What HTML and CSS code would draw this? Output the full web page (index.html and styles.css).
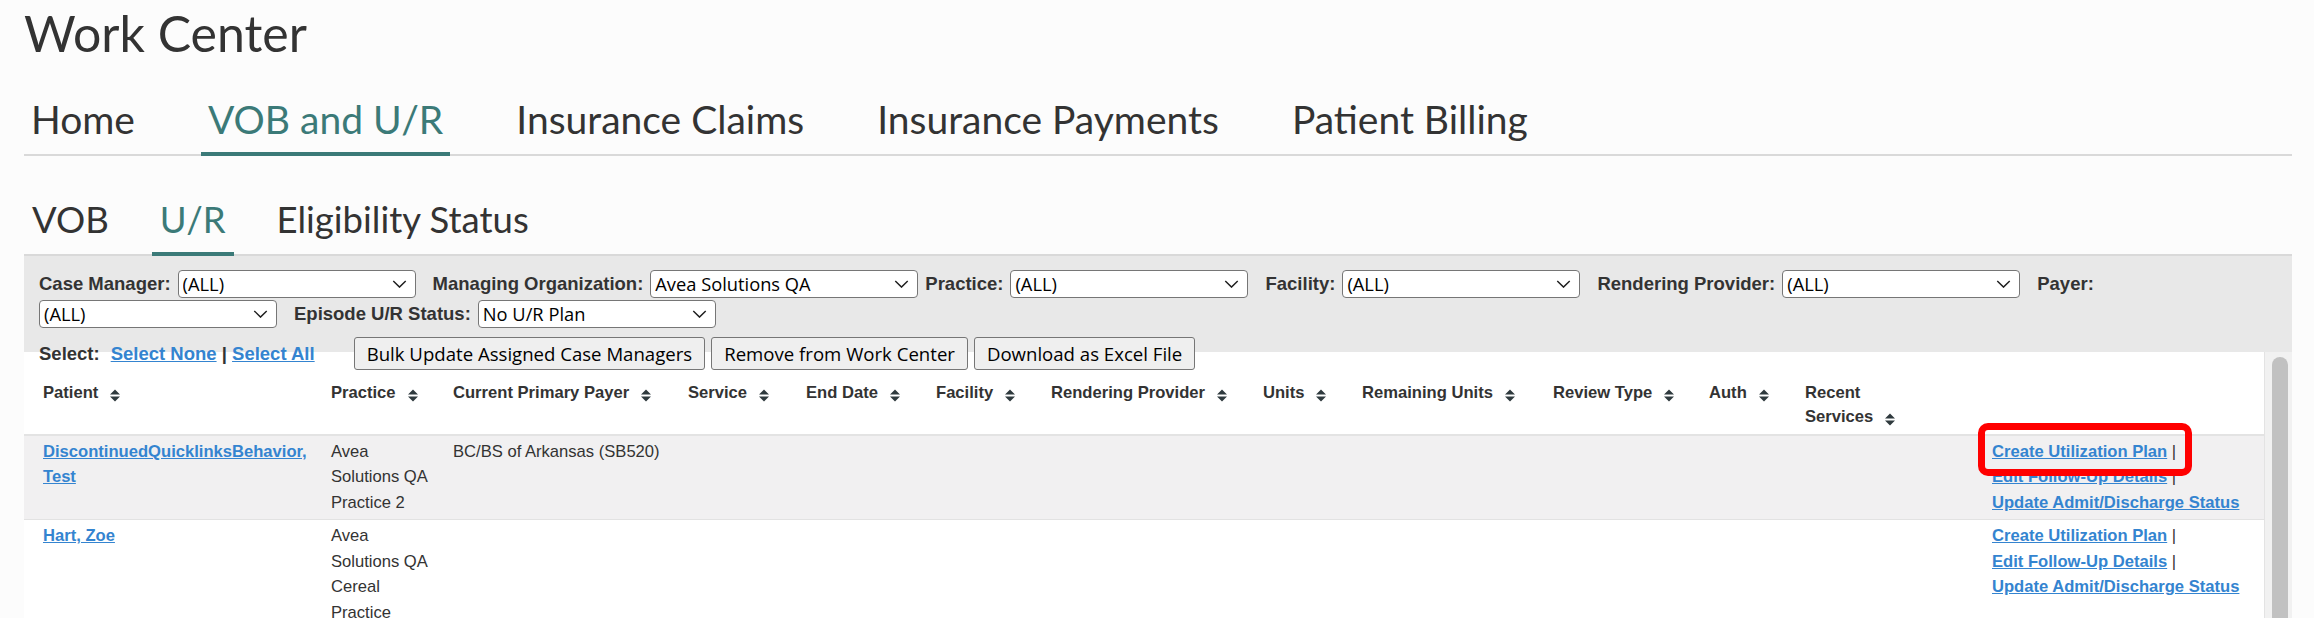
FILE: index.html
```html
<!DOCTYPE html>
<html lang="en">
<head>
	<meta charset="UTF-8">
	<title>Work Center</title>
	<link rel="stylesheet" href="styles.css">
</head>
<body>
<div class="page">
	<h1 class="title">Work Center</h1>

	<ul class="tabs">
		<li>Home</li>
		<li class="on">VOB and U/R</li>
		<li>Insurance Claims</li>
		<li>Insurance Payments</li>
		<li>Patient Billing</li>
	</ul>

	<ul class="tabs sub">
		<li>VOB</li>
		<li class="on">U/R</li>
		<li>Eligibility Status</li>
	</ul>

	<!-- filters -->
	<div class="filters">
		<label>Case Manager:</label>
		<span class="pick"><select><option>(ALL)</option></select><svg class="chev" viewBox="0 0 16 9"><path d="M1 1l7 7 7-7"/></svg></span>
		<label>Managing Organization:</label>
		<span class="pick wide"><select><option>Avea Solutions QA</option></select><svg class="chev" viewBox="0 0 16 9"><path d="M1 1l7 7 7-7"/></svg></span>
		<label>Practice:</label>
		<span class="pick"><select><option>(ALL)</option></select><svg class="chev" viewBox="0 0 16 9"><path d="M1 1l7 7 7-7"/></svg></span>
		<label>Facility:</label>
		<span class="pick"><select><option>(ALL)</option></select><svg class="chev" viewBox="0 0 16 9"><path d="M1 1l7 7 7-7"/></svg></span>
		<label>Rendering Provider:</label>
		<span class="pick"><select><option>(ALL)</option></select><svg class="chev" viewBox="0 0 16 9"><path d="M1 1l7 7 7-7"/></svg></span>
		<label>Payer:</label>
		<span class="pick"><select><option>(ALL)</option></select><svg class="chev" viewBox="0 0 16 9"><path d="M1 1l7 7 7-7"/></svg></span>
		<label>Episode U/R Status:</label>
		<span class="pick"><select><option>No U/R Plan</option></select><svg class="chev" viewBox="0 0 16 9"><path d="M1 1l7 7 7-7"/></svg></span>
	</div>

	<div class="results">
		<div class="results-main">
			<div class="actions">
				<span class="sel-label">Select:</span>
				<span class="sel-links"><a href="#">Select None</a> | <a href="#">Select All</a></span>
				<button>Bulk Update Assigned Case Managers</button><button>Remove from Work Center</button><button>Download as Excel File</button>
			</div>

			<table class="grid">
				<thead>
					<tr>
						<th class="c-patient">Patient<svg class="sort" viewBox="0 0 12 15" width="12" height="15"><path d="M1 6.5 6 1.5 11 6.5Z M1 8.5 6 13.5 11 8.5Z"/></svg></th>
						<th class="c-practice">Practice<svg class="sort" viewBox="0 0 12 15" width="12" height="15"><path d="M1 6.5 6 1.5 11 6.5Z M1 8.5 6 13.5 11 8.5Z"/></svg></th>
						<th class="c-payer">Current Primary Payer<svg class="sort" viewBox="0 0 12 15" width="12" height="15"><path d="M1 6.5 6 1.5 11 6.5Z M1 8.5 6 13.5 11 8.5Z"/></svg></th>
						<th class="c-service">Service<svg class="sort" viewBox="0 0 12 15" width="12" height="15"><path d="M1 6.5 6 1.5 11 6.5Z M1 8.5 6 13.5 11 8.5Z"/></svg></th>
						<th class="c-end">End Date<svg class="sort" viewBox="0 0 12 15" width="12" height="15"><path d="M1 6.5 6 1.5 11 6.5Z M1 8.5 6 13.5 11 8.5Z"/></svg></th>
						<th class="c-facility">Facility<svg class="sort" viewBox="0 0 12 15" width="12" height="15"><path d="M1 6.5 6 1.5 11 6.5Z M1 8.5 6 13.5 11 8.5Z"/></svg></th>
						<th class="c-provider">Rendering Provider<svg class="sort" viewBox="0 0 12 15" width="12" height="15"><path d="M1 6.5 6 1.5 11 6.5Z M1 8.5 6 13.5 11 8.5Z"/></svg></th>
						<th class="c-units">Units<svg class="sort" viewBox="0 0 12 15" width="12" height="15"><path d="M1 6.5 6 1.5 11 6.5Z M1 8.5 6 13.5 11 8.5Z"/></svg></th>
						<th class="c-remaining">Remaining Units<svg class="sort" viewBox="0 0 12 15" width="12" height="15"><path d="M1 6.5 6 1.5 11 6.5Z M1 8.5 6 13.5 11 8.5Z"/></svg></th>
						<th class="c-review">Review Type<svg class="sort" viewBox="0 0 12 15" width="12" height="15"><path d="M1 6.5 6 1.5 11 6.5Z M1 8.5 6 13.5 11 8.5Z"/></svg></th>
						<th class="c-auth">Auth<svg class="sort" viewBox="0 0 12 15" width="12" height="15"><path d="M1 6.5 6 1.5 11 6.5Z M1 8.5 6 13.5 11 8.5Z"/></svg></th>
						<th class="c-recent">Recent<br>Services<svg class="sort" viewBox="0 0 12 15" width="12" height="15"><path d="M1 6.5 6 1.5 11 6.5Z M1 8.5 6 13.5 11 8.5Z"/></svg></th>
						<th class="c-links"></th>
					</tr>
				</thead>
				<tbody>
					<tr class="odd">
						<td><a href="#">DiscontinuedQuicklinksBehavior, Test</a></td>
						<td class="practice">Avea Solutions QA Practice 2</td>
						<td>BC/BS of Arkansas (SB520)</td>
						<td></td><td></td><td></td><td></td><td></td><td></td><td></td><td></td><td></td>
						<td>
							<span class="flag"><a href="#">Create Utilization Plan</a> |</span><br>
							<a href="#">Edit Follow-Up Details</a> |<br>
							<a href="#">Update Admit/Discharge Status</a>
						</td>
					</tr>
					<tr>
						<td><a href="#">Hart, Zoe</a></td>
						<td class="practice">Avea Solutions QA Cereal Practice</td>
						<td></td>
						<td></td><td></td><td></td><td></td><td></td><td></td><td></td><td></td><td></td>
						<td>
							<a href="#">Create Utilization Plan</a> |<br>
							<a href="#">Edit Follow-Up Details</a> |<br>
							<a href="#">Update Admit/Discharge Status</a>
						</td>
					</tr>
				</tbody>
			</table>
		</div>
		<div class="scroll"><div class="thumb"></div></div>
	</div>
</div>
</body>
</html>
```

FILE: styles.css
```css
*{
	box-sizing: border-box;
}
body{
	margin: 0;
	background: #fcfcfc;
	color: #333;
	font-family: "Liberation Sans", Arial, sans-serif;
}
.page{
	padding: 3px 22px 0 24px;
}
.title{
	margin: 0;
	font: 400 50px/1.2 Lato, sans-serif;
	color: #333;
}

/* tabs */
.tabs{
	list-style: none;
	margin: 32.5px 0 0;
	padding: 0;
	display: flex;
	border-bottom: 2px solid #d9d9d9;
}
.tabs li{
	font: 400 39px/1.2 Lato, sans-serif;
	color: #333;
	padding: 0 7px 9.7px;
	margin-right: 59px;
	margin-bottom: -2px;
	border-bottom: 4px solid transparent;
}
.tabs li.on{
	color: #3b7a78;
	border-bottom-color: #3b7a78;
}
.tabs.sub{
	margin-top: 42px;
}
.tabs.sub li{
	font-size: 36.5px;
	padding: 0 8px 10.2px;
	margin-right: 35px;
}

/* filters */
.filters{
	display: flex;
	flex-wrap: wrap;
	align-items: center;
	row-gap: 2px;
	background: #e8e8e8;
	padding: 14px 15px 24px;
}
.filters label{
	font-size: 18.5px;
	font-weight: bold;
	margin-right: 7px;
}
.pick{
	position: relative;
	display: inline-flex;
	width: 238px;
	height: 28px;
	margin-right: 17px;
}
.pick.wide{
	width: 268px;
	margin-right: 7px;
}
.pick select{
	appearance: none;
	-webkit-appearance: none;
	width: 100%;
	height: 100%;
	padding: 0 30px 0 4px;
	font-family: "Open Sans", sans-serif;
	font-size: 18.3px;
	color: #000;
	background: #fff;
	border: 1px solid #767676;
	border-radius: 4px;
}
.chev{
	position: absolute;
	right: 9px;
	top: 10px;
	width: 15px;
	height: 8px;
	fill: none;
	stroke: #1e1e1e;
	stroke-width: 1.6;
	pointer-events: none;
}

/* results */
.results{
	display: flex;
	background: #fff;
}
.results-main{
	flex: 1;
}
.actions{
	display: flex;
	align-items: center;
	height: 34px;
	margin-top: -15px;
	padding-left: 15px;
	font-size: 18.5px;
	font-weight: bold;
}
.sel-label{
	margin-right: 11px;
}
.sel-links{
	margin-right: 39px;
	white-space: pre;
}
a{
	color: #3484d0;
	font-weight: bold;
}
.actions button{
	height: 33px;
	margin-right: 6px;
	padding: 0 12px;
	font-family: "Open Sans", sans-serif;
	font-size: 18.6px;
	font-weight: normal;
	color: #000;
	background: #efefef;
	border: 1px solid #767676;
	border-radius: 3px;
}

/* table */
.grid{
	width: 2240px;
	table-layout: fixed;
	border-collapse: collapse;
	font-size: 16.6px;
}
.grid th{
	text-align: left;
	vertical-align: top;
	line-height: 24px;
	padding: 10px 10px 5px 0;
	border-bottom: 2px solid #e3e3e3;
}
.grid td{
	vertical-align: top;
	line-height: 25.5px;
	padding: 3px 10px 4px 0;
	border-bottom: 1px solid #e2e2e2;
}
.grid th:first-child,
.grid td:first-child{
	padding-left: 19px;
}
.grid td.practice{
	padding-right: 20px;
}
.grid tr.odd td{
	background: #f1f0f1;
}
.sort{
	margin-left: 11px;
	vertical-align: -5px;
	fill: #2f3a3e;
}
.c-patient{ width: 307px; }
.c-practice{ width: 122px; }
.c-payer{ width: 235px; }
.c-service{ width: 118px; }
.c-end{ width: 130px; }
.c-facility{ width: 115px; }
.c-provider{ width: 212px; }
.c-units{ width: 99px; }
.c-remaining{ width: 191px; }
.c-review{ width: 156px; }
.c-auth{ width: 96px; }
.c-recent{ width: 187px; }
.c-links{ width: 272px; }

/* highlight box */
.flag{
	position: relative;
}
.flag::after{
	content: "";
	position: absolute;
	left: -14px;
	right: -16px;
	top: -19px;
	bottom: -15px;
	border: 7px solid #f00;
	border-radius: 10px;
}

/* scrollbar */
.scroll{
	width: 28px;
	background: #f1f1f1;
	border-left: 1px solid #e3e3e3;
	padding: 5px 4px 0 7px;
}
.thumb{
	height: 600px;
	background: #c1c1c1;
	border-radius: 8px;
}
```
